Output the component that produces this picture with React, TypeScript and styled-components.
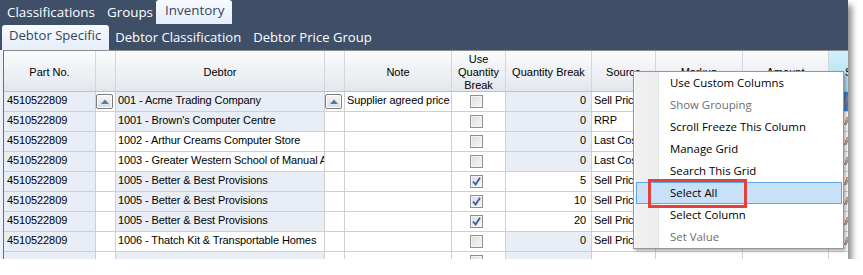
import React from 'react'
import styled, { createGlobalStyle } from 'styled-components'

const GlobalStyle = createGlobalStyle`
  html, body {
    margin: 0;
    padding: 0;
    background: #ffffff;
  }
  body {
    font-family: "Open Sans", "Liberation Sans", sans-serif;
  }
`

const COLUMNS = '92px 20px 209px 20px 107px 54px 86px 64px 87px 86px 60px'

interface PriceRow {
  debtor: string
  note?: string
  useBreak: boolean
  qty: number | ''
  source: string
  plainDebtor?: boolean
  lookup?: boolean
  selected?: boolean
}

const rows: PriceRow[] = [
  { debtor: '001 - Acme Trading Company', note: 'Supplier agreed price', useBreak: false, qty: 0, source: 'Sell Price', lookup: true, selected: true },
  { debtor: "1001 - Brown's Computer Centre", useBreak: false, qty: 0, source: 'RRP' },
  { debtor: '1002 - Arthur Creams Computer Store', useBreak: false, qty: 0, source: 'Last Cost', plainDebtor: true },
  { debtor: '1003 - Greater Western School of Manual Arts', useBreak: false, qty: 0, source: 'Last Cost', plainDebtor: true },
  { debtor: '1005 - Better & Best Provisions', useBreak: true, qty: 5, source: 'Sell Price' },
  { debtor: '1005 - Better & Best Provisions', useBreak: true, qty: 10, source: 'Sell Price' },
  { debtor: '1005 - Better & Best Provisions', useBreak: true, qty: 20, source: 'Sell Price' },
  { debtor: '1006 - Thatch Kit & Transportable Homes', useBreak: false, qty: 0, source: 'Sell Price', plainDebtor: true },
  { debtor: '', useBreak: false, qty: '', source: '' },
]

const menuItems = [
  { label: 'Use Custom Columns' },
  { label: 'Show Grouping', disabled: true },
  { label: 'Scroll Freeze This Column' },
  { label: 'Manage Grid' },
  { label: 'Search This Grid' },
  { label: 'Select All', hot: true },
  { label: 'Select Column' },
  { label: 'Set Value', disabled: true },
]

const Window = styled.div`
  position: relative;
  width: 848px;
  background: #3e4f67;
  box-shadow: 4px 5px 6px rgba(0, 0, 0, 0.45);
`

const TabRow = styled.div<{ $sub?: boolean }>`
  display: flex;
  align-items: flex-start;
  height: 25px;
  padding-left: ${(p) => (p.$sub ? 2 : 1)}px;
`

const Tab = styled.div<{ $active?: boolean; $sub?: boolean }>`
  box-sizing: border-box;
  height: ${(p) => (p.$sub ? 25 : 24)}px;
  padding: ${(p) => (p.$active ? (p.$sub ? '0 8px 3px 7px' : '0 8px 3px 9px') : '0 6px')};
  margin-left: ${(p) => (p.$active && !p.$sub ? -3 : 0)}px;
  line-height: ${(p) => (p.$active ? 21 : 24)}px;
  font-size: ${(p) => (p.$sub ? 13.1 : 13.4)}px;
  white-space: nowrap;
  color: ${(p) => (p.$active ? '#33455d' : '#ffffff')};
  background: ${(p) => (p.$active ? 'linear-gradient(#f7fafe, #e6eef9)' : 'transparent')};
  border-radius: 3px 3px 0 0;
`

const Panel = styled.div`
  height: 209px;
  padding-left: 3px;
  background: #eef2f8;
  overflow: hidden;
`

const Grid = styled.div`
  height: 100%;
  border-left: 1px solid #6e6e6e;
  border-top: 1px solid #8c8c8c;
  background: #ffffff;
  overflow: hidden;
  font-family: "Liberation Sans", Arial, sans-serif;
  font-size: 11px;
  color: #000000;
`

const HeaderRow = styled.div`
  display: grid;
  grid-template-columns: ${COLUMNS};
  height: 41px;
  border-bottom: 1px solid #b9c0c9;
  box-sizing: border-box;
`

const HeaderCell = styled.div<{ $sorted?: boolean }>`
  box-sizing: border-box;
  display: flex;
  align-items: center;
  justify-content: ${(p) => (p.$sorted ? 'flex-start' : 'center')};
  padding: 3px 0 0 ${(p) => (p.$sorted ? 16 : 0)}px;
  text-align: center;
  line-height: 13px;
  border-right: 1px solid #d2d7de;
  background: ${(p) =>
    p.$sorted ? 'linear-gradient(#d3f0fa, #a8dcef)' : 'linear-gradient(#fafbfc, #e3e7ed)'};
  overflow: hidden;
  white-space: nowrap;
`

const BodyRow = styled.div`
  display: grid;
  grid-template-columns: ${COLUMNS};
  height: 20px;
`

const Cell = styled.div<{ $tone?: 'plain' | 'locked' | 'picked'; $align?: 'left' | 'right' | 'center'; $pad?: number }>`
  box-sizing: border-box;
  display: flex;
  align-items: center;
  justify-content: ${(p) =>
    p.$align === 'right' ? 'flex-end' : p.$align === 'center' ? 'center' : 'flex-start'};
  padding: 0 ${(p) => (p.$align === 'right' ? 5 : 2)}px 3px ${(p) => p.$pad ?? 2}px;
  border-right: 1px solid #d0d0d0;
  border-bottom: 1px solid #d0d0d0;
  background: ${(p) => (p.$tone === 'locked' ? '#e9eef6' : p.$tone === 'picked' ? '#3f7fd8' : '#ffffff')};
  white-space: nowrap;
  overflow: hidden;
  letter-spacing: -0.1px;
`

const LookupButton = styled.div`
  box-sizing: border-box;
  width: 17px;
  height: 15px;
  margin: 2px 0 0 -1px;
  display: flex;
  align-items: center;
  justify-content: center;
  border: 1px solid #7d7d7d;
  border-radius: 2px;
  background: linear-gradient(#f6f6f6, #dcdcdc);
  box-shadow: inset 0 0 0 1px #ffffff;
`

const Box = styled.div`
  box-sizing: border-box;
  width: 13px;
  height: 13px;
  margin: 3px 5px 0 0;
  border: 1px solid #8e8f8f;
  background: linear-gradient(135deg, #dcdcdc, #f7f7f7);
  box-shadow: inset 0 0 0 1px #f4f4f4;
  display: flex;
  align-items: center;
  justify-content: center;
`

const Menu = styled.div`
  position: absolute;
  left: 633px;
  top: 71px;
  width: 211px;
  box-sizing: border-box;
  padding: 0 1px;
  border: 1px solid #979797;
  background: #ffffff;
  box-shadow: 2px 2px 3px rgba(0, 0, 0, 0.3);
  font-family: "Open Sans", "Liberation Sans", sans-serif;
  font-size: 11.4px;
`

const Gutter = styled.div`
  position: absolute;
  left: 1px;
  top: 0;
  bottom: 0;
  width: 23px;
  background: linear-gradient(90deg, #f1f1f1, #eeeeee);
  border-right: 1px solid #e2e3e3;
`

const MenuItem = styled.div<{ $disabled?: boolean; $hot?: boolean }>`
  position: relative;
  box-sizing: border-box;
  height: 22px;
  margin-left: 1px;
  padding-left: 33px;
  line-height: 20px;
  border: 1px solid ${(p) => (p.$hot ? '#5ea6ea' : 'transparent')};
  background: ${(p) => (p.$hot ? '#c8e1f8' : 'transparent')};
  color: ${(p) => (p.$disabled ? '#6d6d6d' : '#000000')};
  white-space: nowrap;
`

const Callout = styled.div`
  position: absolute;
  left: 14px;
  top: 107px;
  width: 99px;
  height: 29px;
  box-sizing: border-box;
  border: 3px solid #e5403b;
`

function UpArrow() {
  return (
    <svg width="8" height="5" viewBox="0 0 8 5">
      <path d="M0 5 L4 0.5 L8 5 Z" fill="#4a7ab8" />
    </svg>
  )
}

function Check({ on }: { on: boolean }) {
  return (
    <Box>
      {on && (
        <svg width="9" height="9" viewBox="0 0 9 9">
          <path d="M1 4.5 L3.6 7.5 L8 0.8" fill="none" stroke="#3a58a0" strokeWidth="1.8" />
        </svg>
      )}
    </Box>
  )
}

function Tick() {
  return (
    <svg width="20" height="16" viewBox="0 0 20 16">
      <path d="M15.5 13 L18.5 5" stroke="#c77a3a" strokeWidth="1.2" />
      <path d="M17 13 L19.5 7" stroke="#5b7fc2" strokeWidth="1" />
    </svg>
  )
}

export default function App() {
  return (
    <>
      <GlobalStyle />
      <Window>
        <TabRow>
          <Tab>Classifications</Tab>
          <Tab>Groups</Tab>
          <Tab $active>Inventory</Tab>
        </TabRow>
        <TabRow $sub>
          <Tab $sub $active>Debtor Specific</Tab>
          <Tab $sub>Debtor Classification</Tab>
          <Tab $sub>Debtor Price Group</Tab>
        </TabRow>
        <Panel>
          <Grid>
            <HeaderRow>
              <HeaderCell>Part No.</HeaderCell>
              <HeaderCell />
              <HeaderCell>Debtor</HeaderCell>
              <HeaderCell />
              <HeaderCell>Note</HeaderCell>
              <HeaderCell>
                Use
                <br />
                Quantity
                <br />
                Break
              </HeaderCell>
              <HeaderCell>Quantity Break</HeaderCell>
              <HeaderCell>Source</HeaderCell>
              <HeaderCell>Markup</HeaderCell>
              <HeaderCell>Amount</HeaderCell>
              <HeaderCell $sorted>S</HeaderCell>
            </HeaderRow>
            {rows.map((r, i) => (
              <BodyRow key={i}>
                <Cell $tone="locked" $pad={3}>
                  {r.debtor ? '4510522809' : ''}
                </Cell>
                <Cell $pad={1}>{r.lookup && <LookupButton><UpArrow /></LookupButton>}</Cell>
                <Cell $tone={r.plainDebtor ? 'plain' : 'locked'}>{r.debtor}</Cell>
                <Cell $pad={1}>{r.lookup && <LookupButton><UpArrow /></LookupButton>}</Cell>
                <Cell>{r.note}</Cell>
                <Cell $align="center">
                  <Check on={r.useBreak} />
                </Cell>
                <Cell $align="right" $tone={r.useBreak ? 'plain' : 'locked'}>
                  {r.qty}
                </Cell>
                <Cell>{r.source}</Cell>
                <Cell />
                <Cell />
                <Cell $pad={0} $tone={r.selected ? 'picked' : 'plain'}>
                  {r.debtor && <Tick />}
                </Cell>
              </BodyRow>
            ))}
          </Grid>
        </Panel>
        <Menu>
          <Gutter />
          {menuItems.map((m) => (
            <MenuItem key={m.label} $disabled={m.disabled} $hot={m.hot}>
              {m.label}
            </MenuItem>
          ))}
          <Callout />
        </Menu>
      </Window>
    </>
  )
}
